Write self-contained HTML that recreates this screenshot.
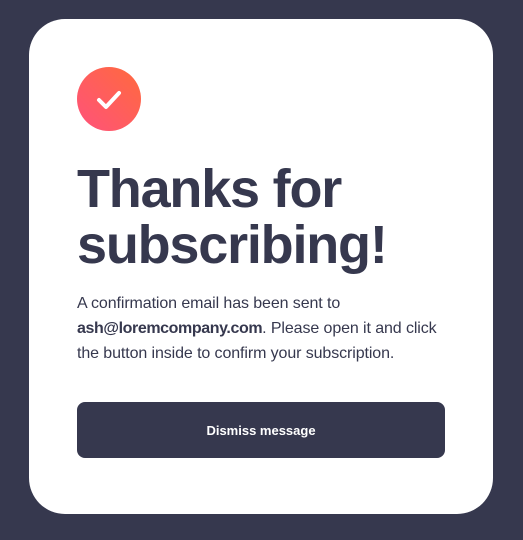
<!DOCTYPE html>
<html><head><style>
body{margin:0;width:523px;height:540px;background:#36384e;font-family:"Liberation Sans",sans-serif;position:relative;overflow:hidden}
.card{position:absolute;left:29px;top:19px;width:464px;height:495px;background:#fff;border-radius:36px}
.ic{position:absolute;left:48px;top:48px;width:64px;height:64px;border-radius:50%;background:linear-gradient(225deg,#ff6a3d,#ff527b)}
h1{position:absolute;left:48px;top:142px;margin:0;font-size:54px;line-height:56px;font-weight:bold;color:#36384e;letter-spacing:-1.2px}
p{position:absolute;left:48px;top:272px;width:380px;margin:0;font-size:16px;line-height:25px;color:#36384e;letter-spacing:-0.1px}
p b{letter-spacing:-0.4px}
.btn{position:absolute;left:48px;top:383px;width:368px;height:56px;background:#36384e;border-radius:8px;color:#fff;font-weight:bold;font-size:13px;line-height:58px;text-align:center}
</style></head><body>
<div class="card">
<div class="ic"><svg width="64" height="64" viewBox="0 0 64 64"><path d="M22 33 L29 40 L42 26" stroke="#fff" stroke-width="4" fill="none" stroke-linecap="round" stroke-linejoin="round"/></svg></div>
<h1>Thanks for subscribing!</h1>
<p>A confirmation email has been sent to <b>ash@loremcompany.com</b>. Please open it and click the button inside to confirm your subscription.</p>
<div class="btn">Dismiss message</div>
</div>
</body></html>
